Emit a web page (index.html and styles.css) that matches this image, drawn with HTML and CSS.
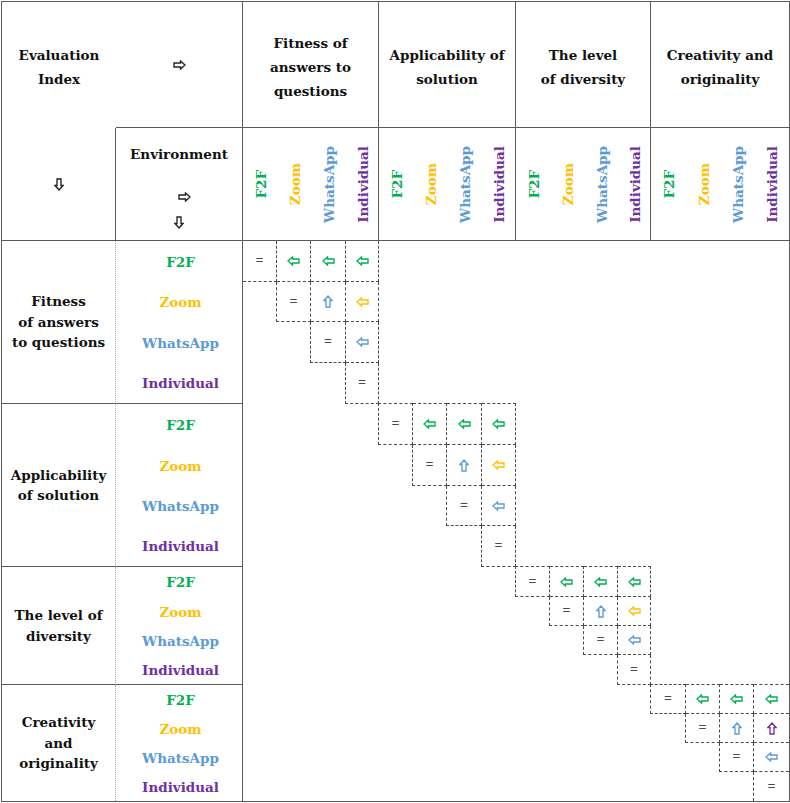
FILE: index.html
```html
<!DOCTYPE html>
<html lang="en">
<head>
<meta charset="utf-8">
<title>Evaluation matrix</title>
<link rel="stylesheet" href="styles.css">
</head>
<body>
<svg class="defs" width="0" height="0" aria-hidden="true">
  <symbol id="al" viewBox="0 0 13 10"><path d="M1 5 L5.5 1 V3 H12 V7 H5.5 V9 Z"/></symbol>
  <symbol id="au" viewBox="0 0 10 13"><path d="M5 1 L9 5.5 H7 V12 H3 V5.5 H1 Z"/></symbol>
  <symbol id="ar" viewBox="0 0 13 10"><path d="M12 5 L7.5 1 V3 H1 V7 H7.5 V9 Z"/></symbol>
  <symbol id="ad" viewBox="0 0 10 13"><path d="M5 12 L9 7.5 H7 V1 H3 V7.5 H1 Z"/></symbol>
</svg>

<div class="tbl">
  <!-- header row 1 -->
  <div class="h-eval">Evaluation<br>Index</div>
  <div class="h-arr"><svg class="ico ih k"><use href="#ar"/></svg></div>
  <div class="hg">Fitness of<br>answers to<br>questions</div>
  <div class="hg">Applicability of<br>solution</div>
  <div class="hg">The level<br>of diversity</div>
  <div class="hg last">Creativity and<br>originality</div>

  <!-- header row 2 -->
  <div class="h-down"><svg class="ico iv k"><use href="#ad"/></svg></div>
  <div class="h-env">
    <span class="env-t">Environment</span>
    <svg class="ico ih k env-r"><use href="#ar"/></svg>
    <svg class="ico iv k env-d"><use href="#ad"/></svg>
  </div>
  <div class="v"><span class="f2f">F2F</span></div>
  <div class="v"><span class="zoom">Zoom</span></div>
  <div class="v"><span class="wa">WhatsApp</span></div>
  <div class="v ge"><span class="ind">Individual</span></div>
  <div class="v"><span class="f2f">F2F</span></div>
  <div class="v"><span class="zoom">Zoom</span></div>
  <div class="v"><span class="wa">WhatsApp</span></div>
  <div class="v ge"><span class="ind">Individual</span></div>
  <div class="v"><span class="f2f">F2F</span></div>
  <div class="v"><span class="zoom">Zoom</span></div>
  <div class="v"><span class="wa">WhatsApp</span></div>
  <div class="v ge"><span class="ind">Individual</span></div>
  <div class="v"><span class="f2f">F2F</span></div>
  <div class="v"><span class="zoom">Zoom</span></div>
  <div class="v"><span class="wa">WhatsApp</span></div>
  <div class="v"><span class="ind">Individual</span></div>

  <!-- group 1 -->
  <div class="grp">Fitness<br>of answers<br>to questions</div>
  <div class="env f2f">F2F</div>
  <div class="m k1"><span class="eq">=</span></div>
  <div class="m k2"><svg class="ico ih g"><use href="#al"/></svg></div>
  <div class="m k3"><svg class="ico ih g"><use href="#al"/></svg></div>
  <div class="m k4"><svg class="ico ih g"><use href="#al"/></svg></div>
  <div class="env zoom">Zoom</div>
  <div class="m k2 l"><span class="eq">=</span></div>
  <div class="m k3"><svg class="ico iv b"><use href="#au"/></svg></div>
  <div class="m k4"><svg class="ico ih y"><use href="#al"/></svg></div>
  <div class="env wa">WhatsApp</div>
  <div class="m k3 l"><span class="eq">=</span></div>
  <div class="m k4"><svg class="ico ih b"><use href="#al"/></svg></div>
  <div class="env ind gl">Individual</div>
  <div class="m k4 l"><span class="eq">=</span></div>

  <!-- group 2 -->
  <div class="grp">Applicability<br>of solution</div>
  <div class="env f2f">F2F</div>
  <div class="m k5 t l"><span class="eq">=</span></div>
  <div class="m k6 t"><svg class="ico ih g"><use href="#al"/></svg></div>
  <div class="m k7 t"><svg class="ico ih g"><use href="#al"/></svg></div>
  <div class="m k8 t"><svg class="ico ih g"><use href="#al"/></svg></div>
  <div class="env zoom">Zoom</div>
  <div class="m k6 l"><span class="eq">=</span></div>
  <div class="m k7"><svg class="ico iv b"><use href="#au"/></svg></div>
  <div class="m k8"><svg class="ico ih y"><use href="#al"/></svg></div>
  <div class="env wa">WhatsApp</div>
  <div class="m k7 l"><span class="eq">=</span></div>
  <div class="m k8"><svg class="ico ih b"><use href="#al"/></svg></div>
  <div class="env ind gl">Individual</div>
  <div class="m k8 l"><span class="eq">=</span></div>

  <!-- group 3 -->
  <div class="grp">The level of<br>diversity</div>
  <div class="env f2f">F2F</div>
  <div class="m k9 t l"><span class="eq">=</span></div>
  <div class="m k10 t"><svg class="ico ih g"><use href="#al"/></svg></div>
  <div class="m k11 t"><svg class="ico ih g"><use href="#al"/></svg></div>
  <div class="m k12 t"><svg class="ico ih g"><use href="#al"/></svg></div>
  <div class="env zoom">Zoom</div>
  <div class="m k10 l"><span class="eq">=</span></div>
  <div class="m k11"><svg class="ico iv b"><use href="#au"/></svg></div>
  <div class="m k12"><svg class="ico ih y"><use href="#al"/></svg></div>
  <div class="env wa">WhatsApp</div>
  <div class="m k11 l"><span class="eq">=</span></div>
  <div class="m k12"><svg class="ico ih b"><use href="#al"/></svg></div>
  <div class="env ind gl">Individual</div>
  <div class="m k12 l"><span class="eq">=</span></div>

  <!-- group 4 -->
  <div class="grp end">Creativity<br>and<br>originality</div>
  <div class="env f2f">F2F</div>
  <div class="m k13 t l"><span class="eq">=</span></div>
  <div class="m k14 t"><svg class="ico ih g"><use href="#al"/></svg></div>
  <div class="m k15 t"><svg class="ico ih g"><use href="#al"/></svg></div>
  <div class="m k16 t nr"><svg class="ico ih g"><use href="#al"/></svg></div>
  <div class="env zoom">Zoom</div>
  <div class="m k14 l"><span class="eq">=</span></div>
  <div class="m k15"><svg class="ico iv b"><use href="#au"/></svg></div>
  <div class="m k16 nr"><svg class="ico iv p"><use href="#au"/></svg></div>
  <div class="env wa">WhatsApp</div>
  <div class="m k15 l"><span class="eq">=</span></div>
  <div class="m k16 nr"><svg class="ico ih b"><use href="#al"/></svg></div>
  <div class="env ind">Individual</div>
  <div class="m k16 l nr nb"><span class="eq">=</span></div>
</div>
</body>
</html>
```

FILE: styles.css
```css
html, body {
  margin: 0;
  padding: 0;
  background: #ffffff;
}

body {
  font-family: "DejaVu Serif", "Liberation Serif", serif;
  font-weight: bold;
  font-size: 13.5px;
  color: #111111;
}

.defs {
  position: absolute;
  width: 0;
  height: 0;
  overflow: hidden;
}

.tbl {
  display: grid;
  grid-template-columns:
    114px 127px
    34px 34px 35px 33px
    34px 34px 35px 34px
    34px 34px 34px 33px
    35px 34px 34px 35px;
  grid-template-rows:
    126px 113px
    41px 40px 41px 41px
    41px 41px 40px 41px
    30px 29px 29px 30px
    29px 29px 29px 29px;
  width: 787px;
  height: 799px;
  margin: 1px 0 0 1px;
  border: 1px solid #5a5a5a;
}

.tbl > div {
  box-sizing: border-box;
  min-width: 0;
  min-height: 0;
}

/* header */
.h-eval {
  display: flex;
  align-items: center;
  justify-content: center;
  text-align: center;
  line-height: 24px;
  padding-top: 4px;
}

.h-arr {
  display: flex;
  align-items: center;
  justify-content: center;
  border-right: 1px solid #5a5a5a;
  border-bottom: 1px solid #5a5a5a;
  padding-top: 1px;
}

.hg {
  grid-column: span 4;
  display: flex;
  align-items: center;
  justify-content: center;
  text-align: center;
  line-height: 24px;
  padding-top: 4px;
  border-right: 1px solid #5a5a5a;
  border-bottom: 1px solid #5a5a5a;
}

.hg.last {
  border-right: none;
}

.h-down {
  display: flex;
  align-items: center;
  justify-content: center;
  border-right: 1px solid #5a5a5a;
  border-bottom: 1px solid #5a5a5a;
}

.h-env {
  display: flex;
  flex-direction: column;
  align-items: center;
  padding-top: 16px;
  border-right: 1px solid #5a5a5a;
  border-bottom: 1px solid #5a5a5a;
}

.env-t {
  line-height: 20px;
}

.env-r {
  margin-top: 28px;
  margin-left: 10px;
}

.env-d {
  margin-top: 14px;
}

.v {
  display: flex;
  align-items: center;
  justify-content: center;
  border-bottom: 1px solid #5a5a5a;
}

.v.ge {
  border-right: 1px solid #5a5a5a;
}

.v span {
  writing-mode: vertical-rl;
  transform: rotate(180deg);
  line-height: 1;
  white-space: nowrap;
  margin-left: 3px;
}

/* colours */
.f2f { color: #00b050; }
.zoom { color: #ffc000; }
.wa { color: #5b9bd5; }
.ind { color: #7030a0; }

/* body labels */
.grp {
  grid-column: 1;
  grid-row: span 4;
  display: flex;
  align-items: center;
  justify-content: center;
  text-align: center;
  line-height: 20.5px;
  border-right: 1px dotted #a8a8a8;
  border-bottom: 1px solid #5a5a5a;
}

.grp.end {
  border-bottom: none;
}

.env {
  grid-column: 2;
  display: flex;
  align-items: center;
  justify-content: center;
  padding-left: 3px;
  border-right: 1px solid #5a5a5a;
}

.env.gl {
  border-bottom: 1px solid #5a5a5a;
}

/* matrix cells */
.m {
  display: flex;
  align-items: center;
  justify-content: center;
  border-right: 1px dashed #4a4a4a;
  border-bottom: 1px dashed #4a4a4a;
}

.m.t {
  border-top: 1px dashed #4a4a4a;
  margin-top: -1px;
}

.m.l {
  border-left: 1px dashed #4a4a4a;
  margin-left: -1px;
}

.m.nr { border-right: none; }
.m.nb { border-bottom: none; }

.k1 { grid-column: 3; }
.k2 { grid-column: 4; }
.k3 { grid-column: 5; }
.k4 { grid-column: 6; }
.k5 { grid-column: 7; }
.k6 { grid-column: 8; }
.k7 { grid-column: 9; }
.k8 { grid-column: 10; }
.k9 { grid-column: 11; }
.k10 { grid-column: 12; }
.k11 { grid-column: 13; }
.k12 { grid-column: 14; }
.k13 { grid-column: 15; }
.k14 { grid-column: 16; }
.k15 { grid-column: 17; }
.k16 { grid-column: 18; }

.eq {
  font-family: "Liberation Serif", serif;
  font-weight: bold;
  font-size: 14px;
  line-height: 1;
  color: #4a4a4a;
}

/* icons */
.ico {
  display: block;
  fill: #ffffff;
  stroke: currentColor;
  stroke-width: 1.35;
  stroke-linejoin: miter;
}

.ih {
  width: 13px;
  height: 10px;
}

.iv {
  width: 10px;
  height: 13px;
}

.k { color: #222222; }
.g { color: #00b050; }
.y { color: #ffc000; }
.b { color: #5b9bd5; }
.p { color: #7030a0; }
```
